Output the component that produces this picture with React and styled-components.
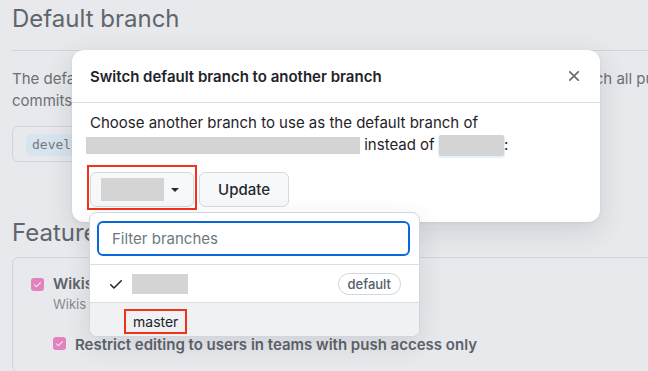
import React from "react";
import styled, { createGlobalStyle } from "styled-components";

const GlobalStyle = createGlobalStyle`
  html, body {
    margin: 0;
    padding: 0;
    background: #e7e9ec;
    overflow: hidden;
  }
  body {
    font-family: Inter, "Liberation Sans", sans-serif;
    -webkit-font-smoothing: antialiased;
  }
`;

const Page = styled.div`
  position: relative;
  height: 371px;
  padding-left: 12px;
  color: #62676e;
  overflow: hidden;
`;

const Subhead = styled.div`
  padding-top: ${(p) => (p.$plain ? "0" : "1px")};
  padding-bottom: ${(p) => (p.$plain ? "0" : "13px")};
  border-bottom: ${(p) => (p.$plain ? "0" : "1px solid #cfd4da")};
`;

const Heading = styled.h2`
  margin: 0;
  font-size: 24px;
  font-weight: 400;
  line-height: 36px;
  color: #60656c;
  white-space: nowrap;
`;

const Lead = styled.p`
  margin: 17px 0 0;
  font-size: 15px;
  line-height: 22px;
  color: #6b7077;
  white-space: nowrap;
`;

const CodeBox = styled.div`
  margin-top: 14px;
  width: 320px;
  height: 36px;
  box-sizing: border-box;
  padding: 6px 13px;
  border: 1px solid #cfd4da;
  border-radius: 6px;
`;

const BranchCode = styled.code`
  display: inline-block;
  height: 22px;
  line-height: 22px;
  padding: 0 6px;
  border-radius: 6px;
  background: #d8e4ee;
  color: #737980;
  font-family: "DejaVu Sans Mono", "Liberation Mono", monospace;
  font-size: 13px;
`;

const Section = styled.section`
  margin-top: 53px;
`;

const Panel = styled.div`
  margin-top: 6px;
  width: 700px;
  box-sizing: border-box;
  padding: 16px 18px;
  border: 1px solid #cfd4da;
  border-radius: 6px;
`;

const Option = styled.div`
  display: flex;
  align-items: flex-start;
  gap: 9px;
  margin-left: ${(p) => (p.$nested ? "22px" : "0")};
  margin-top: ${(p) => (p.$nested ? "21px" : "0")};
`;

const Check = styled.span`
  flex: none;
  width: 13px;
  height: 13px;
  margin-top: ${(p) => (p.$low ? "2px" : "4px")};
  border-radius: 3px;
  background: #e283be;
  display: flex;
  align-items: center;
  justify-content: center;
`;

const OptionTitle = styled.div`
  font-size: 15px;
  font-weight: 600;
  line-height: 20px;
  color: #5d6269;
  white-space: nowrap;
`;

const OptionNote = styled.div`
  font-size: 13px;
  line-height: 20px;
  color: #858a91;
`;

const Modal = styled.div`
  position: absolute;
  left: 72px;
  top: 50px;
  width: 528px;
  background: #fff;
  border-radius: 12px;
  box-shadow: 0 8px 28px rgba(60, 70, 80, 0.16), 0 1px 3px rgba(60, 70, 80, 0.08);
  color: #1f2328;
`;

const ModalHeader = styled.div`
  height: 53px;
  box-sizing: border-box;
  padding: 0 17px 0 18px;
  display: flex;
  align-items: center;
  justify-content: space-between;
  border-bottom: 1px solid #d8dee4;
`;

const ModalTitle = styled.h1`
  margin: 0;
  font-size: 15px;
  font-weight: 600;
`;

const CloseButton = styled.button`
  border: 0;
  padding: 0;
  background: none;
  display: flex;
  color: #656d76;
`;

const ModalBody = styled.div`
  padding: 9px 18px 15px;
`;

const Prompt = styled.p`
  margin: 0;
  font-size: 15px;
  line-height: 22px;
`;

const Redacted = styled.span`
  display: inline-block;
  vertical-align: middle;
  width: ${(p) => p.$w}px;
  height: ${(p) => p.$h}px;
  margin-left: ${(p) => p.$shift || 0}px;
  background: #d4d4d4;
  box-shadow: ${(p) => (p.$code ? "0 1px 0 1px #e3f1fc" : "none")};
  border-radius: ${(p) => (p.$code ? "2px" : "0")};
`;

const Actions = styled.div`
  margin-top: 16px;
  display: flex;
  gap: 5px;
`;

const SelectWrap = styled.div`
  position: relative;
`;

const Button = styled.button`
  height: 35px;
  box-sizing: border-box;
  width: ${(p) => p.$w}px;
  padding: 0 10px;
  display: flex;
  align-items: center;
  justify-content: ${(p) => (p.$center ? "center" : "flex-start")};
  gap: 6px;
  border: 1px solid #d5dae0;
  border-radius: 6px;
  background: #f6f8fa;
  color: #24292f;
  font-family: inherit;
  font-size: 15px;
  font-weight: 500;
`;

const Caret = styled.span`
  width: 0;
  height: 0;
  margin-left: 1px;
  border-left: 4px solid transparent;
  border-right: 4px solid transparent;
  border-top: 4px solid #24292f;
`;

const Highlight = styled.span`
  position: absolute;
  left: -3px;
  right: -3px;
  top: -7px;
  bottom: -3px;
  border: 2px solid #f2331c;
  pointer-events: none;
`;

const Menu = styled.div`
  position: absolute;
  left: -1px;
  top: 40px;
  width: 329px;
  background: #fff;
  border: 1px solid #d0d7de;
  border-radius: 8px;
  box-shadow: 0 8px 24px rgba(66, 74, 83, 0.14);
  overflow: hidden;
  z-index: 2;
`;

const FilterBox = styled.div`
  padding: 8px 9px 8px 7px;
  border-bottom: 1px solid #d8dee4;
`;

const FilterInput = styled.input`
  display: block;
  width: 100%;
  height: 35px;
  box-sizing: border-box;
  padding: 0 13px;
  border: 2px solid #0969da;
  border-radius: 6px;
  outline: none;
  font-family: inherit;
  font-size: 15px;
  color: #1f2328;
  &::placeholder {
    color: #6e7781;
  }
`;

const MenuItem = styled.div`
  height: ${(p) => (p.$active ? "33px" : "37px")};
  display: flex;
  align-items: center;
  gap: 8px;
  padding: 0 18px 0 ${(p) => (p.$active ? "34px" : "18px")};
  background: ${(p) => (p.$active ? "#eff1f3" : "#fff")};
  border-bottom: ${(p) => (p.$active ? "0" : "1px solid #d8dee4")};
  font-size: 14px;
  color: #1f2328;
`;

const Label = styled.span`
  margin-left: auto;
  height: 20px;
  line-height: 20px;
  padding: 0 9px;
  border: 1px solid #d0d7de;
  border-radius: 2em;
  font-size: 13px;
  font-weight: 500;
  color: #57606a;
`;

const MarkedName = styled.span`
  display: inline-block;
  margin-top: 3px;
  height: 25px;
  line-height: 21px;
  box-sizing: border-box;
  padding: 0 7px;
  border: 2px solid #f2331c;
`;

const CheckMark = () => (
  <svg width="9" height="9" viewBox="0 0 16 16" fill="#fff">
    <path d="M13.78 4.22a.75.75 0 0 1 0 1.06l-7.25 7.25a.75.75 0 0 1-1.06 0L2.22 9.28a.751.751 0 0 1 1.06-1.06L6 10.94l6.72-6.72a.75.75 0 0 1 1.06 0Z" />
  </svg>
);

const App = () => {
  return (
    <>
      <GlobalStyle />
      <Page>
        <Subhead>
          <Heading>Default branch</Heading>
        </Subhead>
        <Lead>
          The default branch is considered the “base” branch in your repository, against which all pull requests and code
          <br />
          commits are automatically made, unless you specify a different branch.
        </Lead>
        <CodeBox>
          <BranchCode>develop</BranchCode>
        </CodeBox>

        <Section>
          <Subhead $plain>
            <Heading>Features</Heading>
          </Subhead>
          <Panel>
            <Option>
              <Check>
                <CheckMark />
              </Check>
              <div>
                <OptionTitle>Wikis</OptionTitle>
                <OptionNote>Wikis host documentation for your repository.</OptionNote>
              </div>
            </Option>
            <Option $nested>
              <Check $low>
                <CheckMark />
              </Check>
              <OptionTitle>Restrict editing to users in teams with push access only</OptionTitle>
            </Option>
          </Panel>
        </Section>

        <Modal>
          <ModalHeader>
            <ModalTitle>Switch default branch to another branch</ModalTitle>
            <CloseButton aria-label="Close">
              <svg width="18" height="18" viewBox="0 0 16 16" fill="currentColor">
                <path d="M3.72 3.72a.75.75 0 0 1 1.06 0L8 6.94l3.22-3.22a.749.749 0 0 1 1.275.326.749.749 0 0 1-.215.734L9.06 8l3.22 3.22a.749.749 0 0 1-.326 1.275.749.749 0 0 1-.734-.215L8 9.06l-3.22 3.22a.751.751 0 0 1-1.042-.018.751.751 0 0 1-.018-1.042L6.94 8 3.72 4.78a.75.75 0 0 1 0-1.06Z" />
              </svg>
            </CloseButton>
          </ModalHeader>
          <ModalBody>
            <Prompt>
              Choose another branch to use as the default branch of{" "}
              <Redacted $w={274} $h={17} $shift={-4} /> instead of{" "}
              <Redacted $w={65} $h={21} $code />:
            </Prompt>
            <Actions>
              <SelectWrap>
                <Button $w={104}>
                  <Redacted $w={63} $h={23} />
                  <Caret />
                </Button>
                <Highlight />
                <Menu>
                  <FilterBox>
                    <FilterInput placeholder="Filter branches" />
                  </FilterBox>
                  <MenuItem>
                    <svg width="16" height="16" viewBox="0 0 16 16" fill="#1f2328">
                      <path d="M13.78 4.22a.75.75 0 0 1 0 1.06l-7.25 7.25a.75.75 0 0 1-1.06 0L2.22 9.28a.751.751 0 0 1 .018-1.042.751.751 0 0 1 1.042-.018L6 10.94l6.72-6.72a.75.75 0 0 1 1.06 0Z" />
                    </svg>
                    <Redacted $w={56} $h={20} />
                    <Label>default</Label>
                  </MenuItem>
                  <MenuItem $active>
                    <MarkedName>master</MarkedName>
                  </MenuItem>
                </Menu>
              </SelectWrap>
              <Button $w={90} $center>
                Update
              </Button>
            </Actions>
          </ModalBody>
        </Modal>
      </Page>
    </>
  );
};

export default App;
